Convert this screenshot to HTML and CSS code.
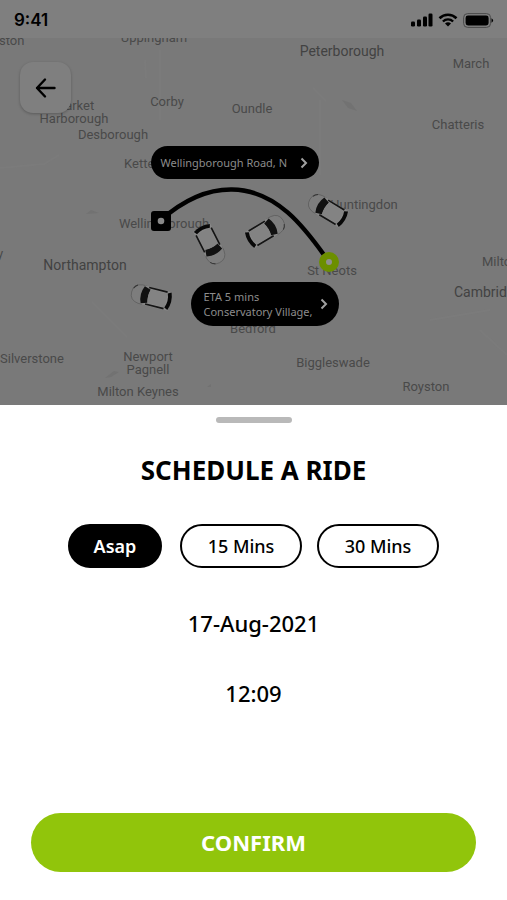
FILE: index.html
```html
<!DOCTYPE html>
<html lang="en">
<head>
<meta charset="utf-8">
<meta name="viewport" content="width=device-width, initial-scale=1">
<title>Schedule a ride</title>
<link rel="stylesheet" href="styles.css">
</head>
<body>
<header class="status">
  <time class="clock">9:41</time>
  <div class="indicators">
    <svg width="22" height="14" viewBox="0 0 22 14" aria-hidden="true">
      <rect x="0" y="8.500" width="4" height="5" rx="1.300"/><rect x="6" y="6.500" width="4" height="7" rx="1.300"/><rect x="12" y="3.500" width="4" height="10" rx="1.300"/><rect x="17.500" y="0.500" width="4" height="13" rx="1.300"/>
    </svg>
    <svg width="20" height="14" viewBox="0 0 20 14" aria-hidden="true">
      <path d="M1.500 5.200a12.200 12.200 0 0 1 17 0" fill="none" stroke="#000" stroke-width="2.600"/>
      <path d="M4.900 8.500a7.300 7.300 0 0 1 10.200 0" fill="none" stroke="#000" stroke-width="2.400"/>
      <path d="M7 10.600a4.300 4.300 0 0 1 6 0L10 13.600z"/>
    </svg>
    <svg width="31" height="15" viewBox="0 0 31 15" aria-hidden="true">
      <rect x=".6" y=".6" width="27" height="13.800" rx="4" fill="none" stroke="#4a4a4a" stroke-width="1"/>
      <rect x="2.600" y="2.600" width="23" height="9.800" rx="2.400"/>
      <path d="M28.500 5.200q1.600.7 1.600 2.300t-1.600 2.300z"/>
    </svg>
  </div>
</header>

<main class="screen">
  <section class="map" aria-label="Route map">
    <svg class="map-art" viewBox="0 38 507 367" preserveAspectRatio="xMidYMid slice">
      <defs>
        <g id="car">
          <path d="M-8-9.500h-4Q-21-8.500-21 0t9 9.500h4z" fill="#7d7d7d" stroke="#5c5c5c" stroke-width=".7"/>
          <path d="M-16.500-8.200q-2.500 1.500-3.500 4.200" fill="none" stroke="#333" stroke-width="1"/>
          <path d="M-9.500-9.500H18.500v19h-28z" fill="#888"/>
          <path d="M-9.500-8.800Q-13.500 0-9.500 8.800l6.500-2Q-5 0-3-6.800z" fill="#111"/>
          <path d="M-5-8.500H14M-5 8.500H14" stroke="#151515" stroke-width="1.700"/>
          <path d="M-3-7Q-5 0-3 7H14.500V-7z" fill="#838383"/>
          <path d="M18-9Q21.500 0 18 9L14.500 7.200Q17.500 0 14.500-7.200z" fill="#080808"/>
        </g>
      </defs>
      <g class="terrain">
        <path d="M145 60l1 18M313 88l13 13M320 100v75M430 320l60 -10M0 168l44-4 15-9M92 302l35 35M480 330l27 25M160 50v70"/>
        <path d="M342 100l9 3 6 8-9-3zM105 378l9-7 5 1-8 5zM86 214l5-4 8 3zM207 387l4-3v3z" class="wood"/>
      </g>
      <g class="labels">
        <text x="-1" y="45">ston</text>
        <text x="154" y="42" text-anchor="middle">Uppingham</text>
        <text class="city" x="342" y="56" text-anchor="middle">Peterborough</text>
        <text x="471" y="68" text-anchor="middle">March</text>
        <text x="167" y="106" text-anchor="middle">Corby</text>
        <text x="252" y="113" text-anchor="middle">Oundle</text>
        <text x="74" y="110" text-anchor="middle">Market</text>
        <text x="74" y="123" text-anchor="middle">Harborough</text>
        <text x="113" y="139" text-anchor="middle">Desborough</text>
        <text x="458" y="129" text-anchor="middle">Chatteris</text>
        <text x="124" y="168">Kettering</text>
        <text x="364" y="209" text-anchor="middle">Huntingdon</text>
        <text x="164" y="228" text-anchor="middle">Wellingborough</text>
        <text x="-3" y="258">y</text>
        <text class="city" x="85" y="270" text-anchor="middle">Northampton</text>
        <text x="332" y="275" text-anchor="middle">St Neots</text>
        <text x="482" y="266">Milton</text>
        <text class="city" x="454" y="297">Cambridge</text>
        <text x="253" y="333" text-anchor="middle">Bedford</text>
        <text x="0" y="363">Silverstone</text>
        <text x="148" y="361" text-anchor="middle">Newport</text>
        <text x="148" y="374" text-anchor="middle">Pagnell</text>
        <text x="138" y="396" text-anchor="middle">Milton Keynes</text>
        <text x="333" y="367" text-anchor="middle">Biggleswade</text>
        <text x="426" y="391" text-anchor="middle">Royston</text>
      </g>
      <path d="M161 220Q196 189 232 189.500C276 190 304 226 329 262" fill="none" stroke="#000" stroke-width="4.400"/>
      <rect x="151" y="211" width="20" height="20" rx="3"/>
      <circle cx="161" cy="221" r="3.300" fill="#888"/>
      <circle cx="329" cy="262" r="6.500" fill="#8f8f8f" stroke="#6c8f00" stroke-width="7"/>
      <use href="#car" transform="translate(152 297) rotate(14)"/>
      <use href="#car" transform="translate(210 244) rotate(243)"/>
      <use href="#car" transform="translate(265 231) rotate(149)"/>
      <use href="#car" transform="translate(328 210) rotate(31)"/>
    </svg>
    <button class="back" type="button" aria-label="Back">
      <svg width="22" height="22" viewBox="0 0 22 22" fill="none" stroke="#000" stroke-width="2.400" stroke-linecap="round" stroke-linejoin="round" aria-hidden="true"><path d="M19.500 11H2M10 2.500L2 11l8 8.500"/></svg>
    </button>
    <button class="place pickup" type="button">
      <span>Wellingborough Road, N</span>
      <svg class="chevron" width="8" height="12" viewBox="0 0 8 12" aria-hidden="true"><path d="M1.500 1.500L6 6l-4.500 4.500"/></svg>
    </button>
    <button class="place dropoff" type="button">
      <span>ETA 5 mins<br>Conservatory Village,</span>
      <svg class="chevron" width="8" height="12" viewBox="0 0 8 12" aria-hidden="true"><path d="M1.500 1.500L6 6l-4.500 4.500"/></svg>
    </button>
  </section>

  <section class="sheet">
    <div class="grabber"></div>
    <h1>SCHEDULE A RIDE</h1>
    <div class="options">
      <button class="option selected" type="button" aria-pressed="true">Asap</button>
      <button class="option" type="button" aria-pressed="false">15 Mins</button>
      <button class="option" type="button" aria-pressed="false">30 Mins</button>
    </div>
    <time class="when">17-Aug-2021</time>
    <time class="when">12:09</time>
    <button class="confirm" type="button">CONFIRM</button>
  </section>
</main>
</body>
</html>
```
FILE: styles.css
```css
* {
  box-sizing: border-box;
}

body {
  margin: 0;
  min-height: 100vh;
  display: flex;
  flex-direction: column;
  background: #fff;
  color: #000;
  font-family: "Noto Sans", "Open Sans", sans-serif;
}

button {
  margin: 0;
  padding: 0;
  border: 0;
  font: inherit;
  color: inherit;
  cursor: pointer;
}

.status {
  display: flex;
  align-items: center;
  justify-content: space-between;
  height: 38px;
  padding: 2px 13px 0 14px;
  background: #7f7f7f;
}

.clock {
  font: 600 17px/20px Inter, sans-serif;
}

.indicators {
  display: flex;
  align-items: center;
  gap: 5px;
}

.screen {
  flex: 1;
  display: flex;
  flex-direction: column;
}

.map {
  position: relative;
  height: 367px;
  overflow: hidden;
  background: #797979;
}

.map-art {
  display: block;
  width: 100%;
  height: 100%;
}

.labels {
  font-family: Roboto, sans-serif;
  font-size: 13px;
  fill: #494949;
}

.labels .city {
  font-size: 14px;
  fill: #424242;
}

.terrain {
  fill: none;
  stroke: #7b7b7b;
  stroke-width: 2px;
}

.terrain .wood {
  fill: #727272;
  stroke: none;
}

.back {
  position: absolute;
  left: 20px;
  top: 24px;
  width: 51px;
  height: 51px;
  display: grid;
  place-items: center;
  border-radius: 13px;
  background: #7f7f7f;
  box-shadow: 0 1px 3px rgba(0, 0, 0, 0.25);
}

.place {
  position: absolute;
  display: flex;
  align-items: center;
  justify-content: space-between;
  border-radius: 24px;
  background: #000;
  color: #8c8c8c;
  font-size: 11px;
  line-height: 15px;
  text-align: left;
  white-space: nowrap;
}

.pickup {
  left: calc(50% - 103px);
  top: 108px;
  width: 168px;
  height: 33px;
  padding: 0 11px 0 10px;
}

.dropoff {
  left: calc(50% - 63px);
  top: 244px;
  width: 148px;
  height: 44px;
  padding: 0 11px 0 13px;
}

.chevron {
  flex: none;
  fill: none;
  stroke: #a0a0a0;
  stroke-width: 2px;
}

.sheet {
  flex: 1;
  display: flex;
  flex-direction: column;
  align-items: center;
  padding: 12px 31px 28px;
  background: #fff;
}

.grabber {
  width: 76px;
  height: 6px;
  border-radius: 3px;
  background: #b9b9b9;
}

h1 {
  margin: 29px 0 0;
  font-size: 26px;
  line-height: 36px;
  font-weight: 700;
}

.options {
  display: flex;
  gap: 15px;
  margin-top: 36px;
}

.option {
  width: 122px;
  height: 44px;
  padding-bottom: 1px;
  border: 2px solid #000;
  border-radius: 22px;
  background: #fff;
  font-size: 18px;
  font-weight: 500;
}

.option.selected {
  width: 94px;
  margin-right: 3px;
  background: #000;
  color: #fff;
  font-weight: 600;
}

.when {
  margin-top: 40px;
  font-size: 22px;
  line-height: 30px;
  font-weight: 500;
}

.confirm {
  width: 100%;
  height: 59px;
  margin-top: auto;
  padding-bottom: 1px;
  border-radius: 30px;
  background: #91c50b;
  color: #fff;
  font-size: 22px;
  font-weight: 700;
}
```
